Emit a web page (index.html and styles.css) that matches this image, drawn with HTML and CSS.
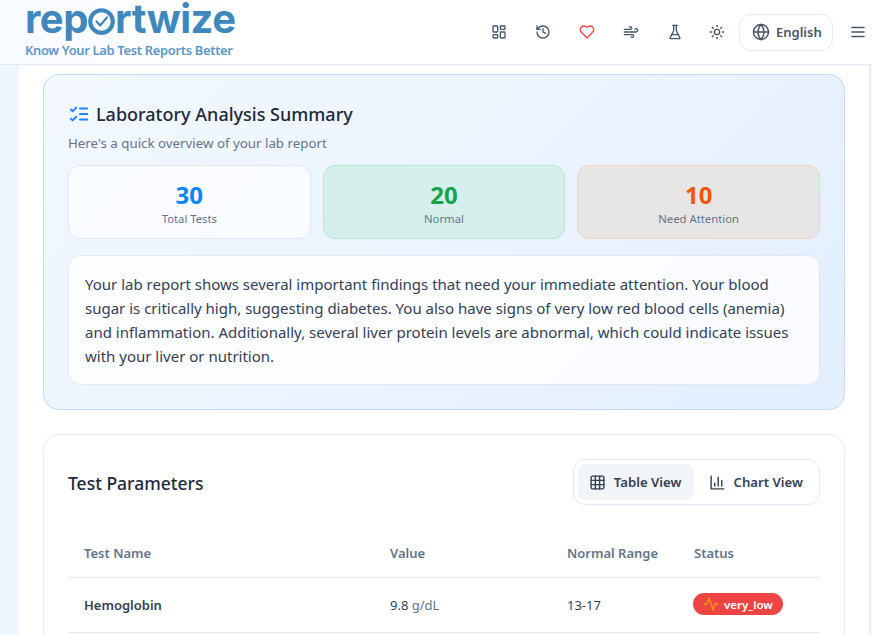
FILE: index.html
```html
<!DOCTYPE html>
<html lang="en">
<head>
    <meta charset="UTF-8">
    <meta name="viewport" content="width=device-width, initial-scale=1.0">
    <title>Reportwize</title>
    <link rel="stylesheet" href="styles.css">
</head>
<body>
    <header class="topbar">
        <div class="logo">
            <div class="logo-word">rep<svg class="logo-o" viewBox="0 0 30 30" fill="none"><circle cx="15" cy="15" r="12.5" stroke-width="4.6"/><path d="M9.5 15l4 4.5 7.5-9" stroke-width="2.4"/></svg>rtwize</div>
            <div class="logo-tag">Know Your Lab Test Reports Better</div>
        </div>
        <nav class="nav">
            <button class="icon-btn"><svg viewBox="0 0 24 24"><rect x="3" y="3" width="7" height="9" rx="1"/><rect x="14" y="3" width="7" height="5" rx="1"/><rect x="14" y="12" width="7" height="9" rx="1"/><rect x="3" y="16" width="7" height="5" rx="1"/></svg></button>
            <button class="icon-btn"><svg viewBox="0 0 24 24"><path d="M3 12a9 9 0 1 0 9-9 9.75 9.75 0 0 0-6.74 2.74L3 8"/><path d="M3 3v5h5"/><path d="M12 7v5l4 2"/></svg></button>
            <button class="icon-btn heart"><svg viewBox="0 0 24 24"><path d="M19 14c1.49-1.46 3-3.21 3-5.5A5.5 5.5 0 0 0 16.5 3c-1.76 0-3 .5-4.5 2-1.5-1.5-2.74-2-4.5-2A5.5 5.5 0 0 0 2 8.5c0 2.3 1.5 4.05 3 5.5l7 7Z"/></svg></button>
            <button class="icon-btn"><svg viewBox="0 0 24 24"><path d="M17.7 7.7a2.5 2.5 0 1 1 1.8 4.3H2"/><path d="M9.6 4.6A2 2 0 1 1 11 8H2"/><path d="M12.6 19.4A2 2 0 1 0 14 16H2"/></svg></button>
            <button class="icon-btn"><svg viewBox="0 0 24 24"><path d="M10 2v7.53a2 2 0 0 1-.21.9L4.72 20.55A1 1 0 0 0 5.61 22h12.78a1 1 0 0 0 .9-1.45l-5.08-10.12a2 2 0 0 1-.21-.9V2"/><path d="M8.5 2h7"/><path d="M7 16h10"/></svg></button>
            <button class="icon-btn sun"><svg viewBox="0 0 24 24"><circle cx="12" cy="12" r="4"/><path d="M12 2v2"/><path d="M12 20v2"/><path d="m4.93 4.93 1.41 1.41"/><path d="m17.66 17.66 1.41 1.41"/><path d="M2 12h2"/><path d="M20 12h2"/><path d="m6.34 17.66-1.41 1.41"/><path d="m19.07 4.93-1.41 1.41"/></svg></button>
            <button class="lang-btn"><svg viewBox="0 0 24 24"><circle cx="12" cy="12" r="10"/><path d="M12 2a14.5 14.5 0 0 0 0 20 14.5 14.5 0 0 0 0-20"/><path d="M2 12h20"/></svg>English</button>
            <button class="menu-btn"><svg viewBox="0 0 24 24"><path d="M4 6h16"/><path d="M4 12h16"/><path d="M4 18h16"/></svg></button>
        </nav>
    </header>

    <main class="content">
        <section class="summary">
            <div class="summary-title">
                <svg viewBox="0 0 24 24"><path d="m3 7 2 2 4-4"/><path d="m3 17 2 2 4-4"/><path d="M13 6h8"/><path d="M13 12h8"/><path d="M13 18h8"/></svg>
                <h2>Laboratory Analysis Summary</h2>
            </div>
            <p class="summary-sub">Here's a quick overview of your lab report</p>
            <div class="stats">
                <div class="stat">
                    <div class="stat-num blue">30</div>
                    <div class="stat-label">Total Tests</div>
                </div>
                <div class="stat good">
                    <div class="stat-num green">20</div>
                    <div class="stat-label">Normal</div>
                </div>
                <div class="stat warn">
                    <div class="stat-num orange">10</div>
                    <div class="stat-label">Need Attention</div>
                </div>
            </div>
            <div class="summary-text">
                Your lab report shows several important findings that need your immediate attention. Your blood sugar is critically high, suggesting diabetes. You also have signs of very low red blood cells (anemia) and inflammation. Additionally, several liver protein levels are abnormal, which could indicate issues with your liver or nutrition.
            </div>
        </section>

        <section class="params">
            <div class="params-head">
                <h3>Test Parameters</h3>
                <div class="view-switch">
                    <button class="view-btn active"><svg viewBox="0 0 24 24"><rect x="3" y="3" width="18" height="18" rx="2"/><path d="M3 9h18"/><path d="M3 15h18"/><path d="M9 3v18"/><path d="M15 3v18"/></svg>Table View</button>
                    <button class="view-btn"><svg viewBox="0 0 24 24"><path d="M3 3v18h18"/><path d="M8 17v-4"/><path d="M13 17V5"/><path d="M18 17V9"/></svg>Chart View</button>
                </div>
            </div>
            <table class="tests">
                <thead>
                    <tr>
                        <th class="col-name">Test Name</th>
                        <th class="col-value">Value</th>
                        <th class="col-range">Normal Range</th>
                        <th>Status</th>
                    </tr>
                </thead>
                <tbody>
                    <tr>
                        <td class="test-name">Hemoglobin</td>
                        <td>9.8 <span class="unit">g/dL</span></td>
                        <td>13-17</td>
                        <td><span class="badge"><svg viewBox="0 0 24 24"><path d="M22 12h-4l-3 9L9 3l-3 9H2"/></svg>very_low</span></td>
                    </tr>
                </tbody>
            </table>
        </section>
    </main>
</body>
</html>
```

FILE: styles.css
```css
html, body {
    height: 635px;
    overflow: hidden;
}
body {
    margin: 0;
    font-family: "Noto Sans", sans-serif;
    background-color: #eff6ff;
    color: #1e293b;
}
svg {
    fill: none;
    stroke: currentColor;
    stroke-width: 2;
    stroke-linecap: round;
    stroke-linejoin: round;
}
button {
    font-family: inherit;
    border: none;
    background: none;
    padding: 0;
    cursor: pointer;
}

.topbar {
    height: 64px;
    display: flex;
    align-items: center;
    justify-content: space-between;
    background-color: #ffffff;
    background-image: linear-gradient(90deg, #f8fbff, #ffffff 30%);
    border-bottom: 1px solid #e2e8f0;
    padding: 0 5px 0 25px;
}
.logo {
    color: #3f88bd;
    padding-bottom: 2px;
}
.logo-word {
    display: flex;
    align-items: flex-end;
    font-family: "Inter", sans-serif;
    font-weight: 700;
    font-size: 40px;
    line-height: 31px;
    height: 31px;
    letter-spacing: -0.45px;
}
.logo-o {
    flex: none;
    width: 27px;
    height: 27px;
    margin-bottom: -1px;
    stroke: #3f88bd;
}
.logo-tag {
    margin-top: 7px;
    font-size: 12.9px;
    font-weight: 600;
    line-height: 18px;
    letter-spacing: -0.3px;
    color: #5b97c5;
}
.nav {
    display: flex;
    align-items: center;
}
.icon-btn {
    width: 44px;
    height: 36px;
    display: flex;
    align-items: center;
    justify-content: center;
    color: #475569;
}
.icon-btn svg {
    width: 16px;
    height: 16px;
}
.heart {
    color: #ef4444;
}
.icon-btn.sun {
    width: 40px;
    margin-right: 2px;
}
.lang-btn {
    display: flex;
    align-items: center;
    gap: 6px;
    width: 94px;
    height: 37px;
    padding-left: 12px;
    box-sizing: border-box;
    border: 1px solid #e2e8f0;
    border-radius: 12px;
    background-color: #ffffff;
    font-size: 13px;
    font-weight: 600;
    color: #475569;
}
.lang-btn svg {
    width: 18px;
    height: 18px;
}
.menu-btn {
    margin-left: 16px;
    width: 18px;
    height: 18px;
    color: #475569;
}
.menu-btn svg {
    display: block;
    width: 18px;
    height: 18px;
}

.content {
    margin: 0 2px 0 19px;
    background-color: #ffffff;
    border-right: 1px solid #e2e8f0;
    padding: 9px 24px 0;
}
.summary {
    height: 336px;
    box-sizing: border-box;
    padding: 24px;
    border: 1px solid #bfdbfe;
    border-radius: 16px;
    background-image: linear-gradient(135deg, #f3f8ff, #e3effe);
}
.summary-title {
    display: flex;
    align-items: center;
    gap: 6px;
    height: 30px;
}
.summary-title svg {
    width: 22px;
    height: 22px;
    color: #1a85ff;
}
.summary-title h2 {
    margin: 0;
    font-size: 18px;
    font-weight: 500;
    color: #1e293b;
}
.summary-sub {
    margin: 4px 0 0;
    font-size: 13.3px;
    line-height: 20px;
    color: #64748b;
}
.stats {
    display: grid;
    grid-template-columns: repeat(3, 1fr);
    gap: 12px;
    margin-top: 12px;
}
.stat {
    height: 74px;
    box-sizing: border-box;
    display: flex;
    flex-direction: column;
    align-items: center;
    padding-top: 13px;
    border: 1px solid #e2e8f0;
    border-radius: 12px;
    background-color: rgba(255, 255, 255, 0.6);
}
.stat.good {
    background-color: #d5f0ec;
    border-color: #b5e6d0;
}
.stat.warn {
    background-color: #e8e5e5;
    border-color: #f0d2c0;
}
.stat-num {
    font-size: 24px;
    font-weight: 700;
    line-height: 32px;
}
.stat-label {
    font-size: 11.3px;
    line-height: 16px;
    color: #64748b;
}
.blue {
    color: #0a84ff;
}
.green {
    color: #16a34a;
}
.orange {
    color: #ea580c;
}
.summary-text {
    margin-top: 16px;
    padding: 16px;
    height: 130px;
    box-sizing: border-box;
    border: 1px solid #e2e8f0;
    border-radius: 12px;
    background-color: rgba(255, 255, 255, 0.8);
    font-size: 15px;
    line-height: 24px;
    color: #334155;
}

.params {
    margin-top: 24px;
    padding: 24px;
    border: 1px solid #e2e8f0;
    border-radius: 16px;
    background-color: #ffffff;
}
.params-head {
    display: flex;
    align-items: center;
    justify-content: space-between;
}
.params-head h3 {
    margin: 2px 0 0;
    font-size: 17.5px;
    font-weight: 500;
    color: #1e293b;
}
.view-switch {
    display: flex;
    gap: 4px;
    padding: 4px;
    border: 1px solid #e2e8f0;
    border-radius: 12px;
}
.view-btn {
    display: flex;
    align-items: center;
    gap: 8px;
    height: 36px;
    padding: 0 12px 0 11px;
    border-radius: 8px;
    font-size: 13.2px;
    font-weight: 600;
    color: #334155;
}
.view-btn svg {
    width: 17px;
    height: 17px;
}
.view-btn.active {
    background-color: #f1f5f9;
}
.tests {
    width: 100%;
    margin-top: 20px;
    border-collapse: collapse;
    table-layout: fixed;
    font-size: 13px;
}
.tests th {
    height: 52px;
    padding: 4px 16px 0;
    box-sizing: border-box;
    text-align: left;
    font-weight: 600;
    color: #64748b;
    border-bottom: 1px solid #e2e8f0;
}
.tests td {
    height: 54px;
    padding: 0 16px;
    color: #334155;
    border-bottom: 1px solid #e2e8f0;
}
.col-name {
    width: 306px;
}
.col-value {
    width: 177px;
}
.col-range {
    width: 127px;
}
.test-name {
    font-weight: 600;
}
.unit {
    color: #64748b;
}
.badge {
    display: inline-flex;
    align-items: center;
    gap: 5px;
    height: 22px;
    margin-left: -1px;
    padding: 0 10px;
    border-radius: 11px;
    background-color: #ef4444;
    color: #ffffff;
    font-size: 11.5px;
    font-weight: 600;
}
.badge svg {
    width: 16px;
    height: 16px;
    color: #f59e0b;
}
```
